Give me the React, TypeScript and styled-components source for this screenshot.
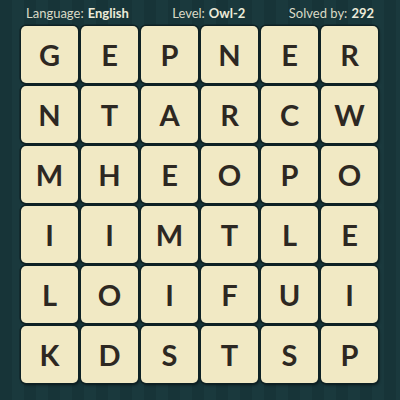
import styled, { createGlobalStyle } from "styled-components";

const GlobalStyle = createGlobalStyle`
  html, body {
    margin: 0;
    padding: 0;
    background: #173539;
  }
`;

const Board = styled.div`
  width: 400px;
  height: 400px;
  box-sizing: border-box;
  display: flex;
  flex-direction: column;
  font-family: Lato, "Open Sans", sans-serif;
  background: repeating-linear-gradient(
    90deg,
    #173438 0px,
    #173438 12px,
    #1a393d 12px,
    #1a393d 24px
  );
`;

const Header = styled.div`
  height: 25px;
  display: flex;
  align-items: center;
  justify-content: space-between;
  padding: 0 26px 1px 26px;
  color: #d9d9c6;
  font-size: 13px;
`;

const Label = styled.span`
  font-weight: 400;
`;

const Value = styled.span`
  font-weight: 700;
  color: #ecebd9;
  margin-left: 4px;
`;

const Grid = styled.div`
  display: grid;
  grid-template-columns: repeat(6, 57px);
  grid-auto-rows: 57px;
  gap: 3px;
  padding-left: 21px;
`;

const Tile = styled.div`
  display: flex;
  align-items: center;
  justify-content: center;
  background: #f1e9c4;
  border-radius: 5px;
  box-shadow: 0 0 0 1.5px #0e2124, 1px 2px 3px rgba(0, 0, 0, 0.55);
  color: #2d2822;
  font-size: 29px;
  font-weight: 700;
`;

const rows = ["GEPNER", "NTARCW", "MHEOPO", "IIMTLE", "LOIFUI", "KDSTSP"];

export default function App() {
  return (
    <>
      <GlobalStyle />
      <Board>
        <Header>
          <span>
            <Label>Language:</Label>
            <Value>English</Value>
          </span>
          <span>
            <Label>Level:</Label>
            <Value>Owl-2</Value>
          </span>
          <span>
            <Label>Solved by:</Label>
            <Value>292</Value>
          </span>
        </Header>
        <Grid>
          {rows.join("").split("").map((ch, i) => (
            <Tile key={i}>{ch}</Tile>
          ))}
        </Grid>
      </Board>
    </>
  );
}
